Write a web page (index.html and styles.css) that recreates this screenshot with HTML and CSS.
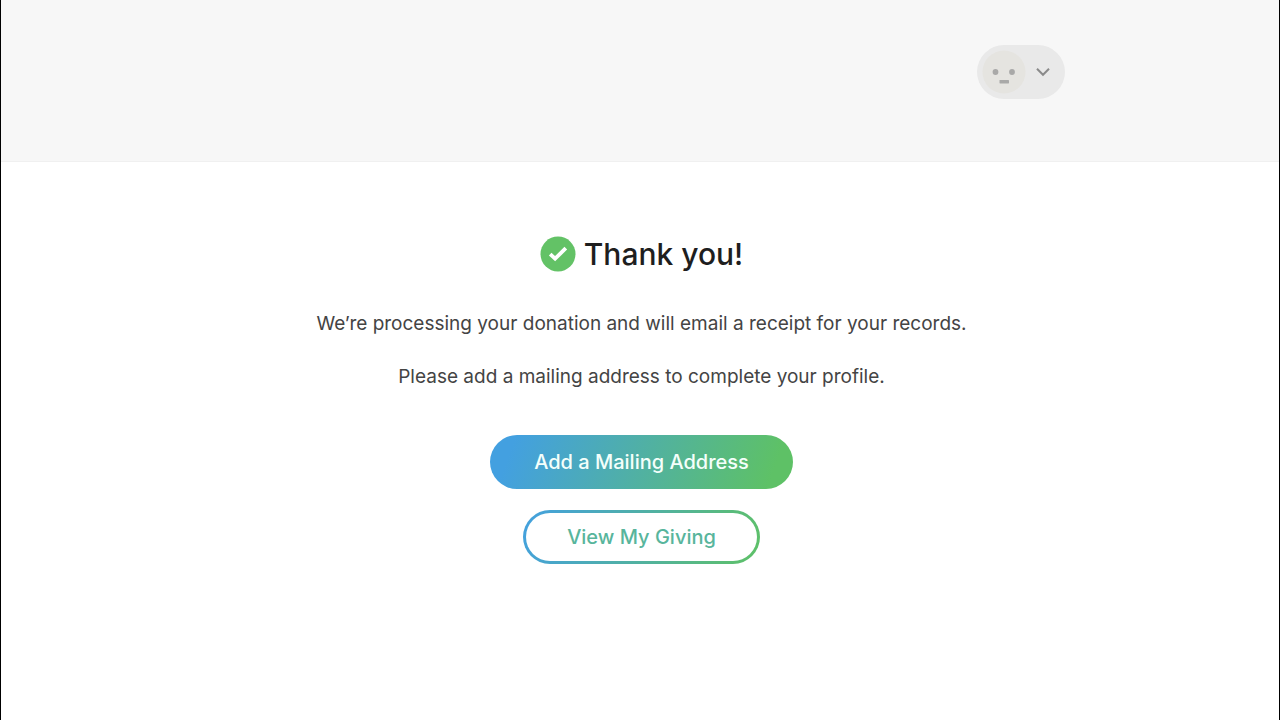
FILE: index.html
```html
<!DOCTYPE html>
<html lang="en">
<head>
<meta charset="utf-8">
<meta name="viewport" content="width=device-width, initial-scale=1">
<title>Thank you!</title>
<link rel="stylesheet" href="styles.css">
</head>
<body class="page">
<header class="topbar">
  <button class="account" type="button" aria-label="Account menu" aria-haspopup="true">
    <svg class="avatar" viewBox="0 0 44 44" aria-hidden="true">
      <circle cx="22" cy="22" r="21.5" fill="#e5e4e0"/>
      <circle cx="13.5" cy="22" r="2.9" fill="#a9a9a8"/>
      <circle cx="30" cy="22" r="2.9" fill="#a9a9a8"/>
      <rect x="17.5" y="30" width="9.5" height="3.4" rx=".6" fill="#a9a9a8"/>
    </svg>
    <svg class="chevron" viewBox="0 0 14 10" aria-hidden="true">
      <path d="M1 1.8 7 7.8l6-6" fill="none" stroke="#8a8a8a" stroke-width="2"/>
    </svg>
  </button>
</header>
<main class="content">
  <h1 class="title">
    <svg class="check" viewBox="0 0 36 36" aria-hidden="true">
      <circle cx="18" cy="18" r="17.5" fill="#63c266"/>
      <path d="M10.2 18.2 15.1 22.7 25.8 12.2" fill="none" stroke="#fff" stroke-width="3.8"/>
    </svg>
    Thank you!
  </h1>
  <p class="message">We’re processing your donation and will email a receipt for your records.</p>
  <p class="message">Please add a mailing address to complete your profile.</p>
  <div class="actions">
    <button class="button button-primary" type="button">Add a Mailing Address</button>
    <button class="button button-outline" type="button">View My Giving</button>
  </div>
</main>
</body>
</html>
```
FILE: styles.css
```css
* {
  box-sizing: border-box;
}

.page {
  margin: 0;
  min-height: 100vh;
  border: solid #000;
  border-width: 0 1px;
  background: #fff;
  color: #444;
  font-family: Inter, "Liberation Sans", sans-serif;
}

.topbar {
  display: flex;
  justify-content: flex-end;
  padding: 45px 214px 62px 24px;
  border-bottom: 1px solid #f0f0f0;
  background: #f7f7f7;
}

.account {
  display: flex;
  align-items: center;
  gap: 10px;
  padding: 5px 15px 5px 5px;
  border: 0;
  border-radius: 27px;
  background: #e9e9e9;
}

.avatar {
  width: 44px;
  height: 44px;
}

.chevron {
  width: 14px;
  height: 10px;
}

.content {
  display: flex;
  flex-direction: column;
  align-items: center;
  padding: 72px 24px 72px 27px;
}

.title {
  display: flex;
  align-items: center;
  gap: 8px;
  margin: 0 0 34px;
  color: #1e1e1e;
  font-size: 30px;
  font-weight: 500;
  line-height: 40px;
}

.check {
  width: 36px;
  height: 36px;
}

.message {
  margin: 0 0 21px;
  font-size: 19px;
  line-height: 32px;
  text-align: center;
}

.actions {
  display: flex;
  flex-direction: column;
  align-items: center;
  gap: 21px;
  margin-top: 21px;
}

.button {
  padding: 11px 41px;
  border: 3px solid transparent;
  border-radius: 27px;
  font-family: inherit;
  font-size: 20px;
  font-weight: 500;
  line-height: 26px;
}

.button-primary {
  background: linear-gradient(110deg, #43a0e0 8%, #5ec166 92%) border-box;
  color: #f4fffb;
}

.button-outline {
  background:
    linear-gradient(#fff, #fff) padding-box,
    linear-gradient(110deg, #43a0e0, #5ec166) border-box;
  color: #58b59c;
}
```
